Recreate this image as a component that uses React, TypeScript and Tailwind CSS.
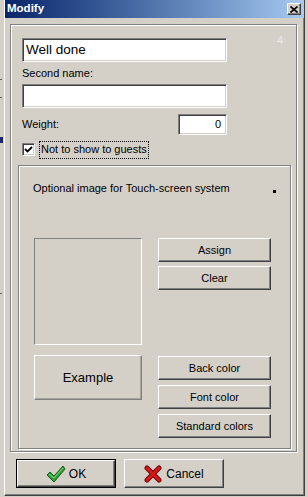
import React from "react";

const raised =
  "bg-[#d4d0c8] border border-t-white border-l-white border-r-[#404040] border-b-[#404040] shadow-[inset_-1px_-1px_0_#808080]";
const sunken =
  "bg-white border border-t-[#808080] border-l-[#808080] border-r-white border-b-white shadow-[inset_1px_1px_0_#404040,inset_-1px_-1px_0_#d4d0c8]";
const etched = "border border-[#808080] shadow-[inset_1px_1px_0_#ffffff,1px_1px_0_#ffffff]";

function Button({ label, className = "" }: { label: string; className?: string }) {
  return (
    <button className={`${raised} h-[24px] w-[113px] flex items-center justify-center text-[11px] text-black ${className}`}>
      {label}
    </button>
  );
}

function CheckIcon() {
  return (
    <svg width="20" height="18" viewBox="0 0 20 18">
      <polygon points="1,10 4,7 8,11 17,1 19,4 8,17" fill="#2f9e34" stroke="#185c1c" strokeWidth="1" strokeLinejoin="round" />
      <polyline points="3,9 8,13 17,3" fill="none" stroke="#7fd67f" strokeWidth="1" />
    </svg>
  );
}

function CrossIcon() {
  return (
    <svg width="18" height="18" viewBox="0 0 18 18">
      <path d="M3 3 L15 15 M15 3 L3 15" stroke="#6e0808" strokeWidth="5" strokeLinecap="round" />
      <path d="M3 3 L15 15 M15 3 L3 15" stroke="#d81818" strokeWidth="3" strokeLinecap="round" />
    </svg>
  );
}

export default function App() {
  return (
    <div className="w-[308px] h-[497px] bg-[#d4d0c8] flex overflow-hidden" style={{ fontFamily: '"Liberation Sans", Arial, sans-serif' }}>
      {/* background window peeking through */}
      <div className="w-[4px] flex flex-col">
        <div className="h-[79px]" />
        <div className="w-[2px] h-[1px] bg-[#606060]" />
        <div className="h-[17px]" />
        <div className="w-[2px] h-[1px] bg-[#606060]" />
        <div className="h-[39px]" />
        <div className="w-[3px] h-[6px] bg-[#1a2a6a]" />
        <div className="h-[150px]" />
        <div className="w-[2px] h-[1px] bg-[#606060]" />
      </div>

      <div className="w-[301px] h-[496px] border-l border-l-white border-r border-r-[#404040] border-b border-b-[#404040] shadow-[inset_-1px_-1px_0_#808080] flex flex-col">
        {/* title bar */}
        <div className="h-[18px] bg-linear-to-r from-[#0a246a] to-[#a6caf0] flex items-center justify-between pl-[2px] pr-[3px]">
          <span className="text-white font-bold text-[11.5px]">Modify</span>
          <div className={`${raised} w-[14px] h-[12px] flex items-center justify-center`}>
            <svg width="8" height="7" viewBox="0 0 8 7">
              <path d="M0.5 0.5 L7.5 6.5 M7.5 0.5 L0.5 6.5" stroke="black" strokeWidth="1.6" />
            </svg>
          </div>
        </div>

        {/* group box */}
        <div className={`${etched} ml-[5px] mt-[6px] w-[287px] h-[428px] pt-[13px] pl-[7px] flex flex-col`}>
          <div className="pl-[4px] flex">
            <div className="flex flex-col w-[205px]">
              <div className={`${sunken} h-[24px] flex items-center pl-[3px] text-[13.5px] text-black`}>Well done</div>
              <div className="mt-[5px] h-[13px] text-[11px] leading-[13px] text-black">Second name:</div>
              <div className={`${sunken} mt-[4px] h-[24px]`} />
              <div className="mt-[6px] h-[21px] flex items-center justify-between">
                <span className="text-[11px] text-black">Weight:</span>
                <div className={`${sunken} w-[49px] h-[21px] flex items-center justify-end pr-[5px] text-[11px] text-black`}>0</div>
              </div>
              <div className="mt-[8px] h-[13px] flex items-center">
                <div className={`${sunken} w-[13px] h-[13px] flex items-center justify-center`}>
                  <svg width="9" height="9" viewBox="0 0 9 9">
                    <path d="M1 4 L3.5 6.5 L8 2" fill="none" stroke="black" strokeWidth="1.8" />
                  </svg>
                </div>
                <span className="ml-[4px] px-[1px] h-[18px] flex items-center border border-dotted border-black text-[11px] text-black">
                  Not to show to guests
                </span>
              </div>
            </div>
            <div className="ml-auto mr-[13px] mt-[-6px] text-[11px] text-[#ebe9e4]">4</div>
          </div>

          {/* inner panel */}
          <div className={`${etched} mt-[9px] w-[273px] h-[284px] pt-[16px] pl-[14px] pr-[14px] flex flex-col`}>
            <div className="flex items-start justify-between h-[13px]">
              <span className="text-[11px] leading-[13px] text-black">Optional image for Touch-screen system</span>
              <div className="mt-[8px] w-[3px] h-[3px] bg-black" />
            </div>
            <div className="mt-[43px] pl-[1px] flex gap-[16px]">
              <div className="flex flex-col w-[108px]">
                <div className="h-[107px] border border-t-[#808080] border-l-[#808080] border-r-white border-b-white" />
                <div className="mt-[10px] h-[45px] border border-t-white border-l-white border-r-[#808080] border-b-[#808080] shadow-[inset_-1px_-1px_0_#a8a49c] flex items-center justify-center text-[13px] text-black">
                  Example
                </div>
              </div>
              <div className="flex flex-col w-[113px]">
                <Button label="Assign" />
                <Button label="Clear" className="mt-[4px]" />
                <Button label="Back color" className="mt-[66px]" />
                <Button label="Font color" className="mt-[5px]" />
                <Button label="Standard colors" className="mt-[5px]" />
              </div>
            </div>
          </div>
        </div>

        {/* dialog buttons */}
        <div className="mt-[7px] ml-[11px] flex gap-[8px]">
          <button className="w-[100px] h-[29px] border border-black bg-[#d4d0c8] flex">
            <div className="flex-1 border border-t-white border-l-white border-r-[#404040] border-b-[#404040] shadow-[inset_-1px_-1px_0_#808080] flex items-center justify-center gap-[3px] text-[12px] text-black">
              <CheckIcon />
              <span>OK</span>
            </div>
          </button>
          <button className={`${raised} w-[100px] h-[29px] flex items-center justify-center gap-[4px] text-[12px] text-black`}>
            <CrossIcon />
            <span>Cancel</span>
          </button>
        </div>
      </div>
    </div>
  );
}
